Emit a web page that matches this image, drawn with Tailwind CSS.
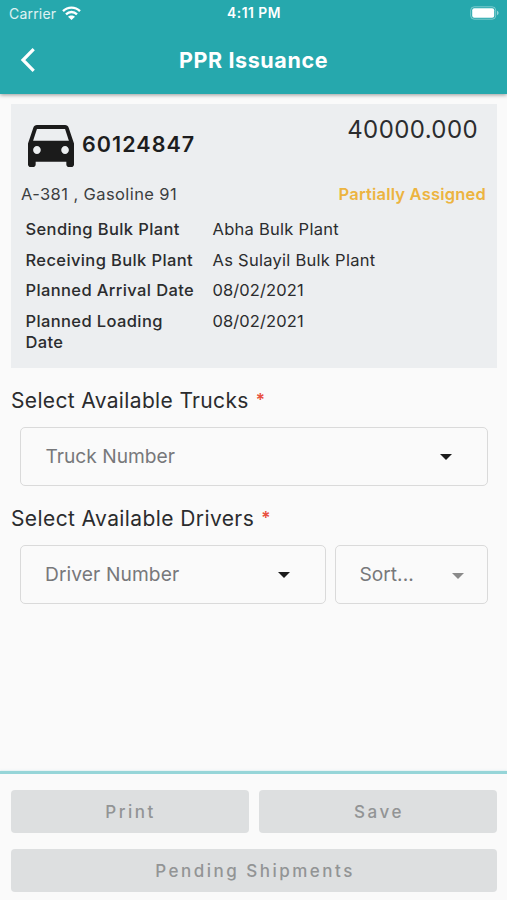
<!DOCTYPE html>
<html lang="en">
<head>
<meta charset="utf-8">
<title>PPR Issuance</title>
<script src="https://cdn.jsdelivr.net/npm/@tailwindcss/browser@4"></script>
</head>
<body class="h-[900px] w-[507px] overflow-hidden bg-[#fafafa] font-['Inter',sans-serif] text-[#2b2c2e]">
<div class="flex h-full flex-col whitespace-nowrap">
  <header class="relative h-[94px] shrink-0 bg-[#26a8ad] text-white shadow-[0_1px_4px_rgba(0,0,0,0.4)]">
    <div class="grid h-[27px] grid-cols-3 items-center pl-[9px] pr-2">
      <div class="flex items-center gap-[6px] text-[14px] tracking-[0.2px] text-white/85"><span>Carrier</span>
        <svg class="-mt-[2px] h-[14px] w-[19px] text-white" viewBox="0 0 19 14" fill="none" stroke="currentColor" stroke-width="2.4"><path d="M1 5.1C5.8.4 13.2.4 18 5.1M4 8.3c3.2-3 7.8-3 11 0"/><path d="M6 10.8c2-1.9 5-1.9 7 0L9.500 14z" fill="currentColor" stroke="none"/></svg>
      </div>
      <div class="text-center text-[13.800px] font-semibold tracking-[0.5px]">4:11 PM</div>
      <svg class="-mt-px h-[14px] w-[29px] justify-self-end" viewBox="0 0 29 14"><rect x=".7" y=".8" width="25" height="12.400" rx="3.500" fill="none" stroke="#fff" stroke-opacity=".4"/><rect x="2.200" y="2.300" width="22" height="9.400" rx="2" fill="#fff"/><path d="M27 4.800c2.100.7 2.100 3.700 0 4.400z" fill="#fff" fill-opacity=".5"/></svg>
    </div>
    <div class="grid h-[66px] grid-cols-[80px_1fr_80px] items-center">
      <svg class="ml-5 h-6 w-4" viewBox="0 0 16 24" fill="none" stroke="#fff" stroke-width="3.200"><path d="M13.700 1.200 3 12l10.700 10.800"/></svg>
      <h1 class="text-center text-[21.5px] font-bold tracking-[0.6px]">PPR Issuance</h1>
    </div>
  </header>

  <section class="ml-[11px] mr-[10px] mt-[10px] h-[264px] shrink-0 bg-[#eceef0]">
    <div class="flex h-[76px] justify-between">
      <div class="flex items-center pl-[17px] pt-1">
        <svg class="mt-[4px] h-[42px] w-[46px]" viewBox="3 5 18 16" preserveAspectRatio="none" fill="#1b1b1b"><path d="M18.920 6.010C18.720 5.420 18.160 5 17.500 5h-11c-.66 0-1.210.42-1.420 1.010L3 12v8c0 .55.45 1 1 1h1c.55 0 1-.45 1-1v-1h12v1c0 .55.45 1 1 1h1c.55 0 1-.45 1-1v-8zM6.500 16c-.83 0-1.500-.67-1.500-1.500S5.670 13 6.500 13s1.500.67 1.500 1.500S7.330 16 6.500 16m11 0c-.83 0-1.500-.67-1.500-1.500s.67-1.500 1.500-1.500 1.500.67 1.500 1.500-.67 1.500-1.500 1.500M5 11l1.500-4.500h11L19 11z"/></svg>
        <span class="ml-2 text-[21.5px] font-semibold tracking-[1.050px] text-[#1d1d1e]">60124847</span>
      </div>
      <span class="mr-[19px] mt-[10px] text-[24px] leading-[32px] tracking-[0.4px]">40000.000</span>
    </div>
    <div class="flex items-center justify-between pl-[10px] pr-[11px] pt-[3px] leading-[22px]">
      <span class="text-[16.500px] tracking-[0.4px] text-[#3c3e40]">A-381 , Gasoline 91</span>
      <span class="text-[16.500px] font-semibold tracking-[0.2px] text-[#ecb440]">Partially Assigned</span>
    </div>
    <dl class="grid grid-cols-[187px_1fr] gap-y-[9.600px] pl-[14.500px] pt-[14px] text-[16.500px] leading-[21px] tracking-[0.270px]">
      <dt class="font-medium tracking-[0.380px]">Sending Bulk Plant</dt><dd>Abha Bulk Plant</dd>
      <dt class="font-medium tracking-[0.380px]">Receiving Bulk Plant</dt><dd>As Sulayil Bulk Plant</dd>
      <dt class="font-medium tracking-[0.380px]">Planned Arrival Date</dt><dd class="tracking-[0.1px]">08/02/2021</dd>
      <dt class="font-medium tracking-[0.380px]">Planned Loading<br>Date</dt><dd class="tracking-[0.1px]">08/02/2021</dd>
    </dl>
  </section>

  <main class="flex-1 pl-[11px] pr-[10px]">
    <h2 class="mt-[19px] flex h-[28px] items-center gap-[7px] text-[21px] tracking-[0.35px]"><span>Select Available Trucks</span><span class="text-[17px] font-semibold text-[#e8503f]">*</span></h2>
    <div class="ml-[9px] mr-[9px] mt-[12px] flex h-[59px] items-center justify-between rounded-[5px] border-[1.500px] border-[#dadada] pl-[24.500px] pr-[35px] text-[19.200px] text-[#77787a]">
      <span>Truck Number</span>
      <svg class="h-[6px] w-3" viewBox="0 0 12 6" fill="#1b1b1b"><path d="M0 0h12L6 6z"/></svg>
    </div>
    <h2 class="mt-[19px] flex h-[28px] items-center gap-[7px] text-[21px] tracking-[0.4px]"><span>Select Available Drivers</span><span class="text-[17px] font-semibold text-[#e8503f]">*</span></h2>
    <div class="ml-[9px] mr-[9px] mt-[12px] flex gap-[9px] text-[19.200px] text-[#77787a]">
      <div class="flex h-[59px] w-[306px] items-center justify-between rounded-[5px] border-[1.500px] border-[#dadada] pl-6 pr-[35px]">
        <span class="tracking-[0.1px]">Driver Number</span>
        <svg class="h-[6px] w-3" viewBox="0 0 12 6" fill="#1b1b1b"><path d="M0 0h12L6 6z"/></svg>
      </div>
      <div class="flex h-[59px] flex-1 items-center justify-between rounded-[5px] border-[1.500px] border-[#dadada] pl-[23.500px] pr-[23px]">
        <span>Sort...</span>
        <svg class="mt-[2px] h-[6px] w-3" viewBox="0 0 12 6" fill="#8a8a8a"><path d="M0 0h12L6 6z"/></svg>
      </div>
    </div>
  </main>

  <footer class="h-[129px] shrink-0 border-t-[3px] border-[#96d5d8] pl-[11px] pr-[10px] pt-4 text-[17px] font-medium tracking-[2.500px] text-[#929495] shadow-[0_0_2px_#96d5d880]">
    <div class="grid grid-cols-2 gap-[10px]">
      <button class="h-[43px] rounded-[4px] bg-[#dddfe0] pl-px pt-[2px] tracking-[inherit]">Print</button>
      <button class="h-[43px] rounded-[4px] bg-[#dddfe0] pl-[2px] pt-[2px] tracking-[inherit]">Save</button>
      <button class="col-span-2 mt-[6px] h-[43px] rounded-[4px] bg-[#dddfe0] pl-[2px] pt-[2px] tracking-[inherit]">Pending Shipments</button>
    </div>
  </footer>
</div>
</body>
</html>
